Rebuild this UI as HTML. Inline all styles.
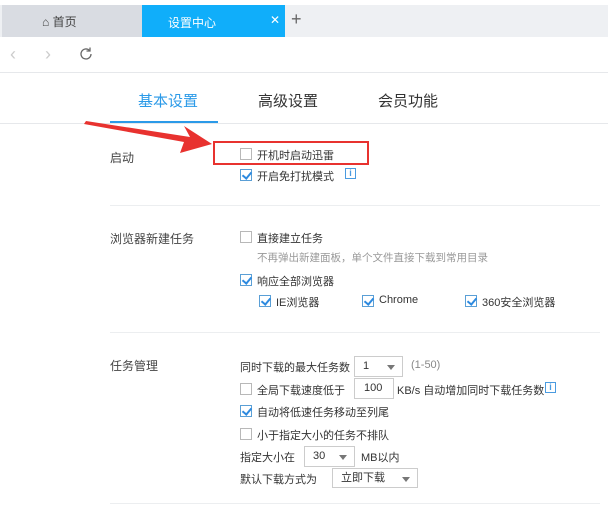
<!DOCTYPE html><html><head><meta charset="utf-8"><style>
*{margin:0;padding:0;box-sizing:border-box}
body{width:608px;height:510px;background:#fff;position:relative;overflow:hidden;font-family:"Liberation Sans","Noto Sans CJK SC",sans-serif;color:#333;font-size:11px}
.a{position:absolute;white-space:nowrap}
.cb{position:absolute;width:12px;height:12px;border:1px solid #b8b8b8;background:#fff}
.cb.c{border-color:#5a9fd6}
.cb.c::after{content:"";position:absolute;left:3px;top:0px;width:4px;height:7px;border:solid #2d8ae0;border-width:0 2px 2px 0;transform:rotate(40deg)}
.hl{position:absolute;height:1px;background:#eceef0}
.sel{position:absolute;border:1px solid #ccc;height:21px;background:#fff;font-size:11px;line-height:19px;padding-left:8px}
.sel::after{content:"";position:absolute;right:7px;top:8px;border:4px solid transparent;border-top:5px solid #777}
.sel.n::after{display:none}
.info{position:absolute;width:11px;height:11px;border:1px solid #4a9be0;color:#4a9be0;font-size:9px;line-height:9px;text-align:center;font-weight:bold}
.lab{font-size:12px;color:#444}
</style></head><body>
<div class="a" style="left:0;top:5px;width:608px;height:32px;background:#eef0f3"></div>
<div class="a" style="left:2px;top:5px;width:140px;height:32px;background:#d9dce2"></div>
<div class="a" style="left:142px;top:5px;width:143px;height:32px;background:#10aefa"></div>
<div class="a" style="left:42px;top:13px;font-size:12px;color:#444">⌂ 首页</div>
<div class="a" style="left:168px;top:14px;font-size:12px;color:#fff">设置中心</div>
<div class="a" style="left:270px;top:13px;font-size:12px;color:#fff">✕</div>
<div class="a" style="left:291px;top:9px;font-size:18px;color:#666;font-weight:300">+</div>
<div class="a" style="left:10px;top:44px;font-size:18px;color:#ccc">‹</div>
<div class="a" style="left:45px;top:44px;font-size:18px;color:#ccc">›</div>
<svg class="a" style="left:78px;top:46px" width="16" height="16" viewBox="0 0 16 16"><path d="M13 8a5 5 0 1 1-1.6-3.7" fill="none" stroke="#666" stroke-width="1.3"/><path d="M12 1.5v3.5h-3.5" fill="none" stroke="#666" stroke-width="1.3"/></svg>
<div class="hl" style="left:0;top:72px;width:608px;background:#e6e8eb"></div>
<div class="a" style="left:138px;top:90px;font-size:15px;color:#2b9ae8">基本设置</div>
<div class="a" style="left:258px;top:90px;font-size:15px;color:#333">高级设置</div>
<div class="a" style="left:378px;top:90px;font-size:15px;color:#333">会员功能</div>
<div class="hl" style="left:0;top:123px;width:608px;background:#e6e8eb"></div>
<div class="a" style="left:110px;top:121px;width:108px;height:2px;background:#2b9ae8"></div>
<svg class="a" style="left:80px;top:115px" width="140" height="40"><polygon points="6,6 110,22 104,11 132,29 100,38 104,27 4,9" fill="#e8322f"/></svg>
<div class="a" style="left:213px;top:141px;width:156px;height:24px;border:2px solid #e8322f"></div>
<div class="a lab" style="left:110px;top:149px">启动</div>
<div class="cb" style="left:240px;top:148px"></div><div class="a" style="left:257px;top:147px">开机时启动迅雷</div>
<div class="cb c" style="left:240px;top:169px"></div><div class="a" style="left:257px;top:168px">开启免打扰模式</div>
<div class="info" style="left:345px;top:168px">i</div>
<div class="hl" style="left:110px;top:205px;width:490px"></div>
<div class="a lab" style="left:110px;top:230px">浏览器新建任务</div>
<div class="cb" style="left:240px;top:231px"></div><div class="a" style="left:257px;top:230px">直接建立任务</div>
<div class="a" style="left:257px;top:250px;color:#999;font-size:10.5px">不再弹出新建面板，单个文件直接下载到常用目录</div>
<div class="cb c" style="left:240px;top:274px"></div><div class="a" style="left:257px;top:273px">响应全部浏览器</div>
<div class="cb c" style="left:259px;top:295px"></div><div class="a" style="left:276px;top:294px">IE浏览器</div>
<div class="cb c" style="left:362px;top:295px"></div><div class="a" style="left:379px;top:294px">Chrome</div>
<div class="cb c" style="left:465px;top:295px"></div><div class="a" style="left:482px;top:294px">360安全浏览器</div>
<div class="hl" style="left:110px;top:332px;width:490px"></div>
<div class="a lab" style="left:110px;top:357px">任务管理</div>
<div class="a" style="left:240px;top:359px">同时下载的最大任务数</div>
<div class="sel" style="left:354px;top:356px;width:49px">1</div>
<div class="a" style="left:411px;top:359px;color:#888">(1-50)</div>
<div class="cb" style="left:240px;top:383px"></div><div class="a" style="left:257px;top:382px">全局下载速度低于</div>
<div class="sel n" style="left:354px;top:378px;width:40px;padding-left:9px">100</div>
<div class="a" style="left:397px;top:382px">KB/s 自动增加同时下载任务数</div>
<div class="info" style="left:545px;top:382px">i</div>
<div class="cb c" style="left:240px;top:405px"></div><div class="a" style="left:257px;top:404px">自动将低速任务移动至列尾</div>
<div class="cb" style="left:240px;top:428px"></div><div class="a" style="left:257px;top:427px">小于指定大小的任务不排队</div>
<div class="a" style="left:240px;top:449px">指定大小在</div>
<div class="sel" style="left:304px;top:446px;width:51px">30</div>
<div class="a" style="left:361px;top:449px">MB以内</div>
<div class="a" style="left:240px;top:471px">默认下载方式为</div>
<div class="sel" style="left:332px;top:468px;width:86px;height:20px">立即下载</div>
<div class="hl" style="left:110px;top:503px;width:490px"></div>
</body></html>
